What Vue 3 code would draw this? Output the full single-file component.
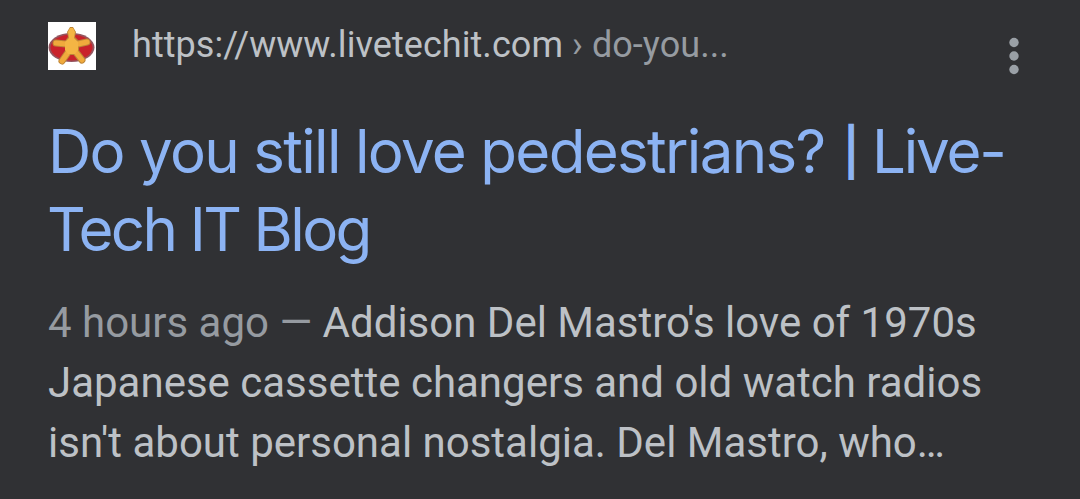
<template>
	<article class="result">
		<header class="result-header">
			<svg class="favicon" viewBox="0 0 48 48">
				<rect width="48" height="48" fill="#fff" />
				<ellipse cx="23.500" cy="25.500" rx="23" ry="14.500" fill="#94555f" />
				<ellipse cx="23.500" cy="25.500" rx="21" ry="13" fill="#c9222b" />
				<g class="outline">
					<path d="M8 21l10 1h12l9-2" />
					<path d="M21 29l-7 10M27 29l7 9" />
				</g>
				<path d="M20 15l-1-5 3-5h3l3 5-1 5 4 4v9l-3 5h-8l-3-5v-9z" fill="#bd8537" />
				<g class="limbs">
					<path d="M8 21l10 1h12l9-2" />
					<path d="M21 29l-7 10M27 29l7 9" />
				</g>
				<path d="M21 16l-1-6 2-4h3l2 4-1 6 4 4v8l-3 4h-7l-3-4v-8z" fill="#f4b544" />
			</svg>
			<div class="url">
				<span class="domain">{{ result.domain }}</span>
				<span class="separator">›</span>
				<span class="path">{{ result.path }}</span>
			</div>
			<svg class="menu" viewBox="0 0 12 38">
				<circle v-for="y in [5.5, 19, 32.5]" :key="y" cx="6" :cy="y" r="4.7" />
			</svg>
		</header>
		<h3 class="title">
			<span class="line"
				>{{ result.title }} <span class="bar">|</span> <span class="site">Live-</span></span
			>
			<span class="line line-end">Tech IT Blog</span>
		</h3>
		<p class="snippet">
			<span class="line"
				><span class="date">{{ result.date }} — </span>{{ result.snippet[0] }}</span
			>
			<span class="line">{{ result.snippet[1] }}</span>
			<span class="line">{{ result.snippet[2] }}</span>
		</p>
	</article>
</template>

<script setup>
const result = {
	domain: 'https://www.livetechit.com',
	path: 'do-you...',
	title: 'Do you still love pedestrians?',
	date: '4 hours ago',
	snippet: [
		"Addison Del Mastro's love of 1970s",
		'Japanese cassette changers and old watch radios',
		"isn't about personal nostalgia. Del Mastro, who…",
	],
};
</script>

<style>
body {
	margin: 0;
	background: #303134;
}
</style>

<style scoped>
.result {
	box-sizing: border-box;
	height: 499px;
	padding: 22px 48px 0;
	overflow: hidden;
	background: #303134;
	color: #bdc1c6;
	font-family: Roboto, sans-serif;
}

.result-header {
	display: flex;
	align-items: flex-start;
	height: 90px;
}

.favicon {
	width: 48px;
	height: 48px;
}

.outline,
.limbs {
	fill: none;
	stroke: #bd8537;
	stroke-width: 7;
	stroke-linecap: round;
	stroke-linejoin: round;
}

.limbs {
	stroke: #f0aa3c;
	stroke-width: 5;
}

.url {
	display: flex;
	flex: 1;
	margin-left: 36px;
	font-size: 36px;
	letter-spacing: 0.06px;
	line-height: 46px;
	white-space: pre;
}

.separator {
	margin: 0 9px;
}

.separator,
.path,
.date {
	color: #969ba1;
}

.menu {
	width: 12px;
	height: 38px;
	margin: 15px 12px 0 0;
	fill: #9aa0a6;
}

.title {
	margin: 0;
	color: #8cb3f3;
	font-family: Inter, sans-serif;
	font-size: 60px;
	font-weight: 400;
	letter-spacing: -1.68px;
	line-height: 78px;
}

.line {
	display: block;
	white-space: pre;
}

.line-end {
	margin-left: -1px;
	letter-spacing: -2.6px;
}

.bar {
	margin: 0 -1px 0 3px;
	font-size: 47px;
	font-weight: 600;
	line-height: 1;
	vertical-align: 4px;
}

.site {
	letter-spacing: -2.2px;
}

.snippet {
	margin: 25px 0 0;
	font-size: 42px;
	line-height: 60px;
}
</style>
